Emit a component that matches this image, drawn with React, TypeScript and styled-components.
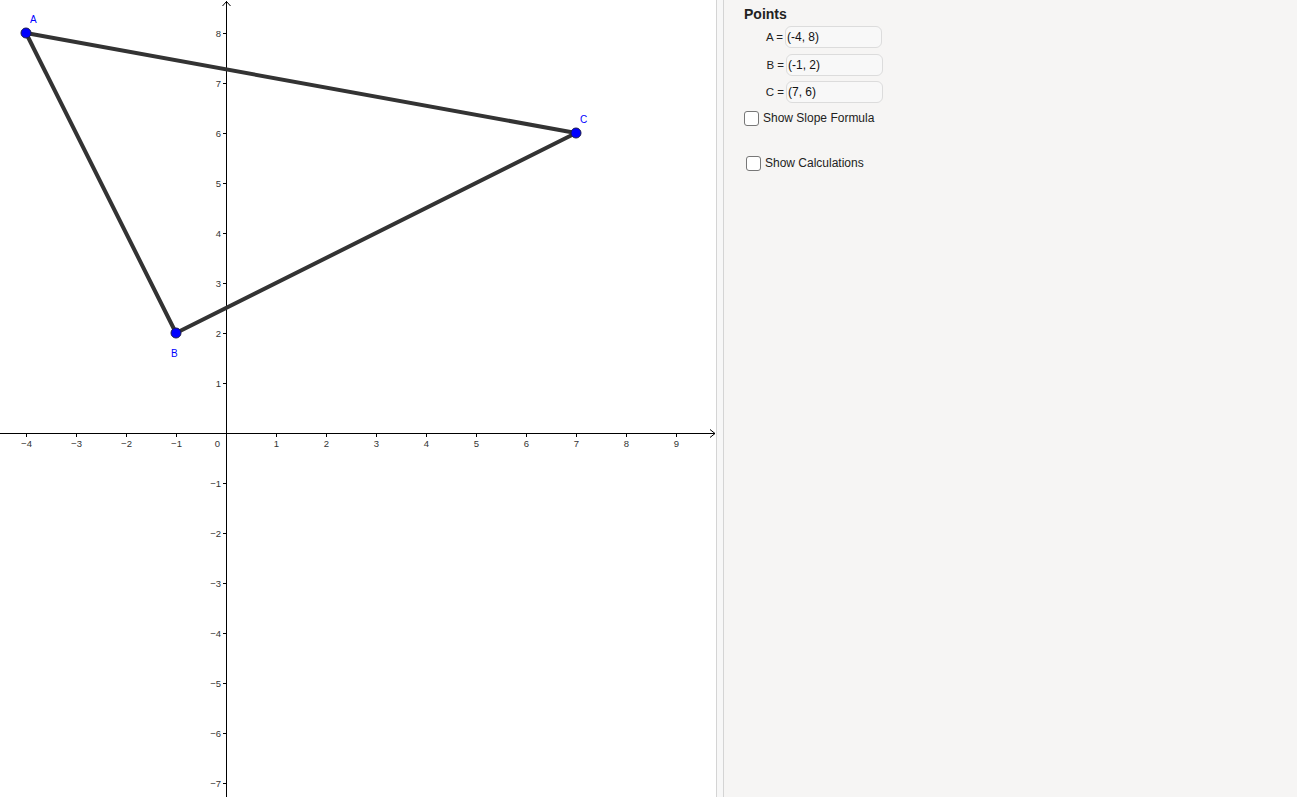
import React from "react";
import styled, { createGlobalStyle } from "styled-components";

const Global = createGlobalStyle`
  html, body { margin: 0; padding: 0; background: #ffffff; }
  body { font-family: "Liberation Sans", Arial, sans-serif; }
`;

const App = styled.div`
  display: flex;
  width: 1297px;
  height: 797px;
  overflow: hidden;
`;

const Graphics = styled.div`
  width: 716px;
  height: 100%;
  background: #ffffff;
  flex: none;
`;

const Divider = styled.div`
  width: 6px;
  height: 100%;
  flex: none;
  border-left: 1px solid #d4d4d4;
  border-right: 1px solid #d4d4d4;
  background: #f7f7f7;
`;

const Panel = styled.div`
  flex: 1;
  background: #f6f5f4;
  padding: 6px 0 0 20px;
  display: flex;
  flex-direction: column;
  font-family: "Liberation Sans", Arial, sans-serif;
  color: #222;
`;

const Title = styled.div`
  font-size: 14px;
  font-weight: bold;
  line-height: 17px;
  margin-bottom: 3px;
`;

const Fields = styled.div`
  display: flex;
  flex-direction: column;
  gap: 5.5px;
  padding-left: 20px;
`;

const FieldRow = styled.div<{ $shift?: number }>`
  display: flex;
  align-items: center;
  gap: 2px;
  padding-left: ${(p) => p.$shift ?? 0}px;
`;

const FieldLabel = styled.span`
  width: 19px;
  text-align: right;
  font-size: 11.5px;
  white-space: nowrap;
`;

const Field = styled.div`
  width: 97px;
  height: 22px;
  box-sizing: border-box;
  border: 1px solid #dcdcdc;
  border-radius: 6px;
  background: #f8f8f8;
  font-size: 12px;
  line-height: 20px;
  padding-left: 1px;
  color: #111;
`;

const Check = styled.label<{ $top: number; $left: number }>`
  display: flex;
  align-items: center;
  gap: 4px;
  margin-top: ${(p) => p.$top}px;
  margin-left: ${(p) => p.$left}px;
  font-size: 12px;
  line-height: 15px;
  color: #222;
`;

const Box = styled.span`
  width: 15px;
  height: 15px;
  box-sizing: border-box;
  border: 1px solid #777;
  border-radius: 3px;
  background: #fff;
  flex: none;
`;

const X0 = 226;
const Y0 = 433;
const U = 50;
const px = (x: number) => X0 + x * U;
const py = (y: number) => Y0 - y * U;

const neg = (n: number) => (n < 0 ? "\u2212" + Math.abs(n) : String(n));

const Plot: React.FC = () => {
  const xs = [-4, -3, -2, -1, 1, 2, 3, 4, 5, 6, 7, 8, 9];
  const ys = [8, 7, 6, 5, 4, 3, 2, 1, -1, -2, -3, -4, -5, -6, -7];
  const A = [px(-4), py(8)];
  const B = [px(-1), py(2)];
  const C = [px(7), py(6)];
  return (
    <svg width="716" height="797" viewBox="0 0 716 797" style={{ display: "block" }}>
      <g stroke="#000" strokeWidth="1" fill="none">
        <line x1={X0 + 0.5} y1="1" x2={X0 + 0.5} y2="797" />
        <polyline points={`${X0 - 3.5},6 ${X0 + 0.5},1.5 ${X0 + 4.5},6`} />
        <line x1="0" y1={Y0 + 0.5} x2="715" y2={Y0 + 0.5} />
        <polyline points={`710,${Y0 - 3.5} 715,${Y0 + 0.5} 710,${Y0 + 4.5}`} />
        {xs.map((x) => (
          <line key={"tx" + x} x1={px(x) + 0.5} y1={Y0 + 1} x2={px(x) + 0.5} y2={Y0 + 4} />
        ))}
        {ys.map((y) => (
          <line key={"ty" + y} x1={X0 - 3} y1={py(y) + 0.5} x2={X0} y2={py(y) + 0.5} />
        ))}
      </g>
      <g fill="#333" fontFamily="Liberation Sans, Arial, sans-serif" fontSize="9.5">
        {xs.map((x) => (
          <text key={"lx" + x} x={px(x) + 0.5} y={Y0 + 14} textAnchor="middle">
            {neg(x)}
          </text>
        ))}
        <text x={X0 - 6} y={Y0 + 14} textAnchor="end">0</text>
        {ys.map((y) => (
          <text key={"ly" + y} x={X0 - 5} y={py(y) + 4} textAnchor="end">
            {neg(y)}
          </text>
        ))}
      </g>
      <g stroke="#333" strokeWidth="4" strokeLinecap="round">
        <line x1={A[0]} y1={A[1]} x2={B[0]} y2={B[1]} />
        <line x1={B[0]} y1={B[1]} x2={C[0]} y2={C[1]} />
        <line x1={C[0]} y1={C[1]} x2={A[0]} y2={A[1]} />
      </g>
      <g fill="#0000ff" stroke="#1a1a4d" strokeWidth="1">
        <circle cx={A[0]} cy={A[1]} r="5" />
        <circle cx={B[0]} cy={B[1]} r="5" />
        <circle cx={C[0]} cy={C[1]} r="5" />
      </g>
      <g fill="#0000ff" fontFamily="Liberation Sans, Arial, sans-serif" fontSize="10">
        <text x="30" y="23">A</text>
        <text x="171" y="357">B</text>
        <text x="580" y="123">C</text>
      </g>
    </svg>
  );
};

export default function Root() {
  return (
    <>
      <Global />
      <App>
        <Graphics>
          <Plot />
        </Graphics>
        <Divider />
        <Panel>
          <Title>Points</Title>
          <Fields>
            <FieldRow>
              <FieldLabel>A =</FieldLabel>
              <Field>(-4, 8)</Field>
            </FieldRow>
            <FieldRow $shift={1}>
              <FieldLabel>B =</FieldLabel>
              <Field>(-1, 2)</Field>
            </FieldRow>
            <FieldRow $shift={1}>
              <FieldLabel>C =</FieldLabel>
              <Field>(7, 6)</Field>
            </FieldRow>
          </Fields>
          <Check $top={8} $left={0}>
            <Box />
            Show Slope Formula
          </Check>
          <Check $top={30} $left={2}>
            <Box />
            Show Calculations
          </Check>
        </Panel>
      </App>
    </>
  );
}
